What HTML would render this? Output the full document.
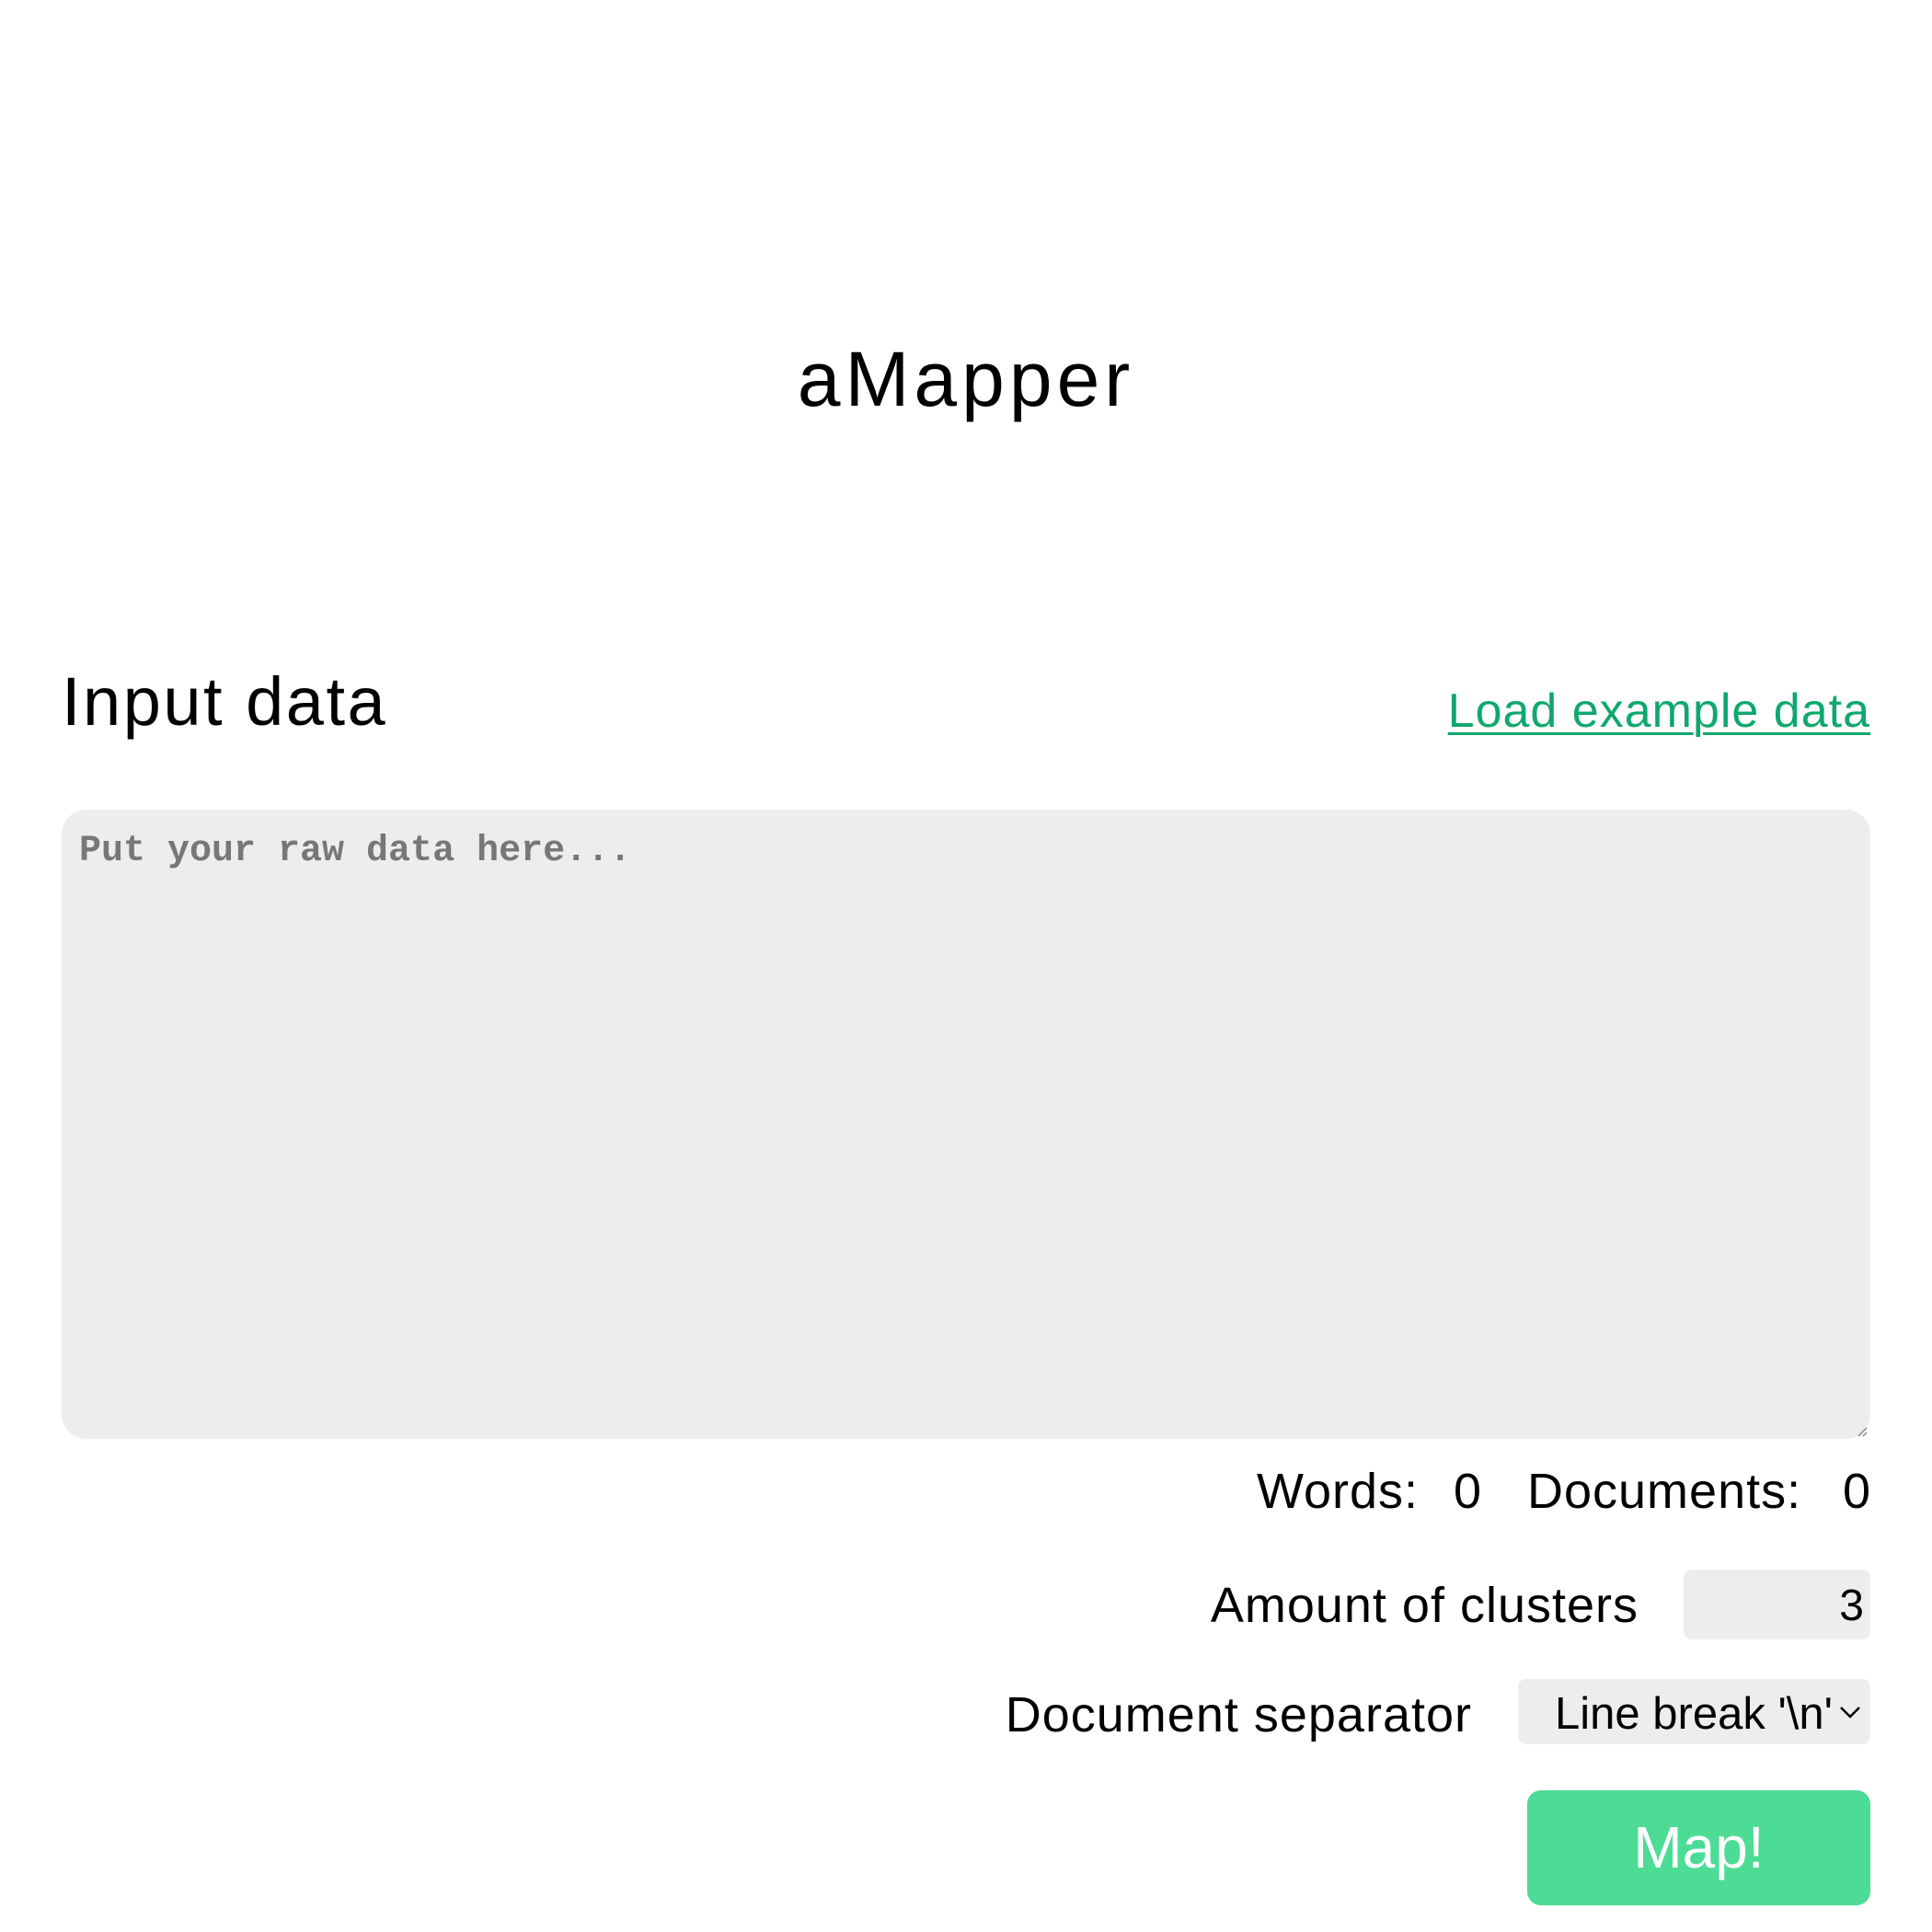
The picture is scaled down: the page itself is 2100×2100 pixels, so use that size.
<!DOCTYPE html>
<html><head><meta charset="utf-8"><style>
html,body{margin:0;padding:0;background:#fff;width:2100px;height:2100px;overflow:hidden;font-family:"Liberation Sans",sans-serif;color:#000}
.a{position:absolute;white-space:nowrap;line-height:1}
</style></head><body>
<div class="a" style="left:0;width:2100px;text-align:center;top:370px;font-size:84px;letter-spacing:5px">aMapper</div>
<div class="a" style="left:67px;top:726px;font-size:74px;letter-spacing:2.5px">Input data</div>
<div class="a" style="right:67px;top:747px;font-size:52px;color:#0fa86c;text-decoration:underline;text-decoration-thickness:3px;text-underline-offset:6px;letter-spacing:1px">Load example data</div>
<div class="a" style="left:67px;top:880px;width:1966px;height:684px;background:#ededed;border-radius:27px"></div>
<div class="a" style="left:86px;top:906px;font-family:'Liberation Mono',monospace;font-weight:600;font-size:40px;color:#777">Put your raw data here...</div>
<svg class="a" style="left:2018px;top:1550px" width="12" height="12"><path d="M2 11L11 2M7 11L11 7" stroke="#888" stroke-width="1.5"/></svg>
<div class="a" style="left:1366px;top:1594px;font-size:54px;letter-spacing:1px">Words:</div>
<div class="a" style="left:1580px;top:1594px;font-size:54px">0</div>
<div class="a" style="left:1660px;top:1594px;font-size:54px;letter-spacing:1px">Documents:</div>
<div class="a" style="right:67px;top:1594px;font-size:54px">0</div>
<div class="a" style="right:319px;top:1718px;font-size:54px;letter-spacing:1px">Amount of clusters</div>
<div class="a" style="left:1830px;top:1706px;width:203px;height:76px;background:#ededed;border-radius:9px"></div>
<div class="a" style="right:74px;top:1722px;font-size:48px">3</div>
<div class="a" style="right:500px;top:1837px;font-size:54px;letter-spacing:1px">Document separator</div>
<div class="a" style="left:1650px;top:1825px;width:383px;height:71px;background:#ededed;border-radius:9px"></div>
<div class="a" style="left:1690px;top:1839px;font-size:49px;font-weight:500">Line break '\n'</div>
<svg class="a" style="left:1998px;top:1853px" width="26" height="16"><path d="M3 3L13 13L23 3" fill="none" stroke="#000" stroke-width="2.5"/></svg>
<div class="a" style="left:1660px;top:1946px;width:373px;height:125px;background:#4cdc96;border-radius:15px"></div>
<div class="a" style="left:1660px;width:373px;text-align:center;top:1976px;font-size:64px;color:#fff;font-weight:500">Map!</div>
</body></html>
